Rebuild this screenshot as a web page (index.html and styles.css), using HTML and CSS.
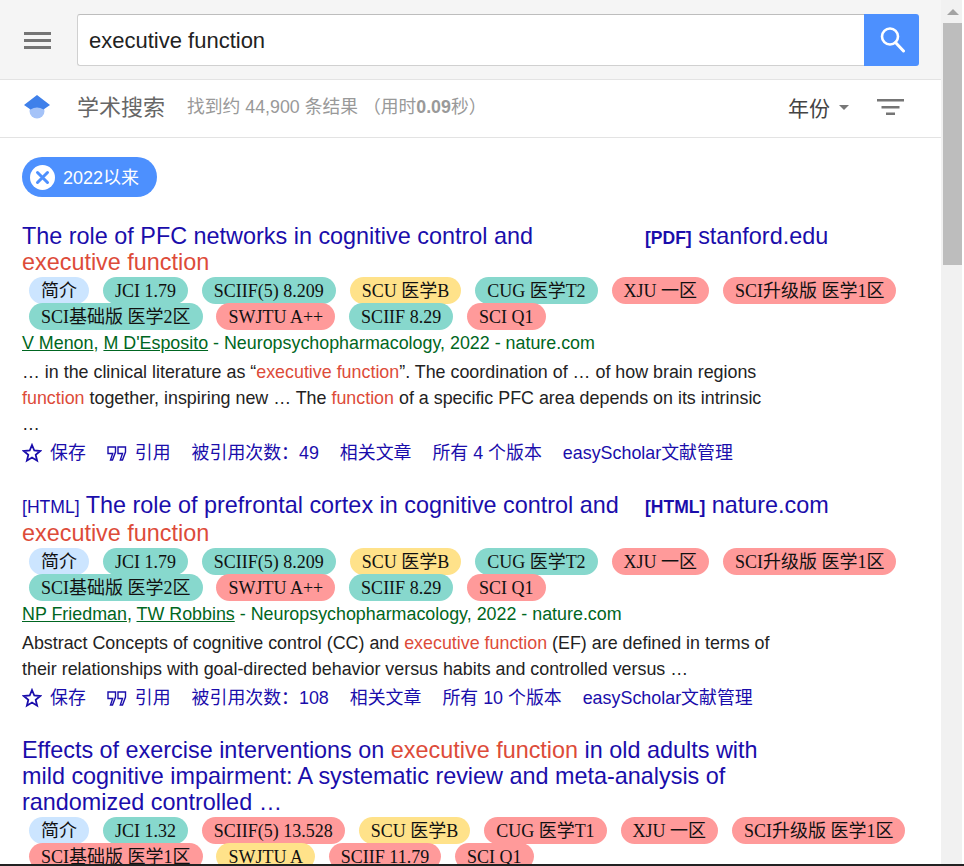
FILE: index.html
```html
<!DOCTYPE html>
<html lang="zh">
<head>
<meta charset="utf-8">
<title>executive function - 学术搜索</title>
<link rel="stylesheet" href="styles.css">
</head>
<body>
<div class="window">
  <main class="page">
    <header class="topbar">
      <svg class="menu-icon" width="27" height="17" viewBox="0 0 27 17"><path d="M0 0h27v3H0zM0 7h27v3H0zM0 14h27v3H0z" fill="#757575"/></svg>
      <div class="search">
        <div class="search-input">executive function</div>
        <div class="search-btn">
          <svg width="26" height="26" viewBox="0 0 26 26" fill="none" stroke="#fff" stroke-width="2.600"><circle cx="11" cy="9.500" r="8"/><path d="M16.500 15.500l8 8.500" stroke-linecap="round" stroke-width="3"/></svg>
        </div>
      </div>
    </header>
    <div class="subbar">
      <svg class="logo" width="26" height="24" viewBox="0 0 26 24"><circle cx="13" cy="16" r="7.500" fill="#a5c3f8"/><path d="M13 0l13 10-6.500 4.500Q13 10.500 6.500 14.500L0 10z" fill="#3f80ea"/></svg>
      <span class="brand">学术搜索</span>
      <span class="stats">找到约 44,900 条结果 （用时<b>0.09</b>秒）</span>
      <span class="year">年份</span>
      <span class="caret"></span>
      <svg class="filter" width="27" height="16" viewBox="0 0 27 16"><path d="M0 0h27v2.500H0zM4.500 7h18v2.500h-18zM9 13.500h9V16H9z" fill="#757575"/></svg>
    </div>
    <div class="content">
      <div class="chip">
        <svg width="25" height="25" viewBox="0 0 25 25"><circle cx="12.500" cy="12.500" r="12.500" fill="#fff"/><path d="M7.500 7.500l10 10M17.500 7.500l-10 10" stroke="#4d90fe" stroke-width="3" stroke-linecap="round"/></svg>
        <span>2022以来</span>
      </div>

      <article class="result">
        <div class="title-row">
          <h3 class="title">The role of PFC networks in cognitive control and <em>executive function</em></h3>
          <div class="side"><b>[PDF]</b> stanford.edu</div>
        </div>
        <div class="tags">
          <span class="tag blue">简介</span><span class="tag teal">JCI 1.79</span><span class="tag teal">SCIIF(5) 8.209</span><span class="tag yellow">SCU 医学B</span><span class="tag teal">CUG 医学T2</span><span class="tag red">XJU 一区</span><span class="tag red">SCI升级版 医学1区</span><span class="tag teal">SCI基础版 医学2区</span><span class="tag red">SWJTU A++</span><span class="tag teal">SCIIF 8.29</span><span class="tag red">SCI Q1</span>
        </div>
        <div class="meta"><u>V Menon</u>, <u>M D'Esposito</u> - Neuropsychopharmacology, 2022 - nature.com</div>
        <p class="snippet">… in the clinical literature as “<em>executive function</em>”. The coordination of … of how brain regions <em>function</em> together, inspiring new … The <em>function</em> of a specific PFC area depends on its intrinsic …</p>
        <div class="actions">
          <span class="action"><svg class="star" width="20" height="20" viewBox="0 0 20 20"><path d="M10 2l2.300 5.500 5.900.5-4.500 3.900 1.400 5.800L10 14.600l-5.100 3.100 1.400-5.800L1.800 8l5.900-.5z" fill="none" stroke="#1a0dab" stroke-width="1.800"/></svg>保存</span>
          <span class="action"><svg class="quote" width="20" height="15" viewBox="0 0 20 15"><path d="M1 1h7.500v5l-3 8H3.500l2.200-6.500H1zM11 1h7.500v5l-3 8h-2.200l2.200-6.500H11z" fill="none" stroke="#1a0dab" stroke-width="1.400"/></svg>引用</span>
          <span>被引用次数：49</span>
          <span>相关文章</span>
          <span>所有 4 个版本</span>
          <span>easyScholar文献管理</span>
        </div>
      </article>

      <article class="result">
        <div class="title-row">
          <h3 class="title"><small>[HTML]</small> The role of prefrontal cortex in cognitive control and <em>executive function</em></h3>
          <div class="side"><b>[HTML]</b> nature.com</div>
        </div>
        <div class="tags">
          <span class="tag blue">简介</span><span class="tag teal">JCI 1.79</span><span class="tag teal">SCIIF(5) 8.209</span><span class="tag yellow">SCU 医学B</span><span class="tag teal">CUG 医学T2</span><span class="tag red">XJU 一区</span><span class="tag red">SCI升级版 医学1区</span><span class="tag teal">SCI基础版 医学2区</span><span class="tag red">SWJTU A++</span><span class="tag teal">SCIIF 8.29</span><span class="tag red">SCI Q1</span>
        </div>
        <div class="meta"><u>NP Friedman</u>, <u>TW Robbins</u> - Neuropsychopharmacology, 2022 - nature.com</div>
        <p class="snippet">Abstract Concepts of cognitive control (CC) and <em>executive function</em> (EF) are defined in terms of their relationships with goal-directed behavior versus habits and controlled versus …</p>
        <div class="actions">
          <span class="action"><svg class="star" width="20" height="20" viewBox="0 0 20 20"><path d="M10 2l2.300 5.500 5.900.5-4.500 3.900 1.400 5.800L10 14.600l-5.100 3.100 1.400-5.800L1.800 8l5.900-.5z" fill="none" stroke="#1a0dab" stroke-width="1.800"/></svg>保存</span>
          <span class="action"><svg class="quote" width="20" height="15" viewBox="0 0 20 15"><path d="M1 1h7.500v5l-3 8H3.500l2.200-6.500H1zM11 1h7.500v5l-3 8h-2.200l2.200-6.500H11z" fill="none" stroke="#1a0dab" stroke-width="1.400"/></svg>引用</span>
          <span>被引用次数：108</span>
          <span>相关文章</span>
          <span>所有 10 个版本</span>
          <span>easyScholar文献管理</span>
        </div>
      </article>

      <article class="result">
        <h3 class="title wide">Effects of exercise interventions on <em>executive function</em> in old adults with mild cognitive impairment: A systematic review and meta-analysis of randomized controlled …</h3>
        <div class="tags">
          <span class="tag blue">简介</span><span class="tag teal">JCI 1.32</span><span class="tag red">SCIIF(5) 13.528</span><span class="tag yellow">SCU 医学B</span><span class="tag red">CUG 医学T1</span><span class="tag red">XJU 一区</span><span class="tag red">SCI升级版 医学1区</span><span class="tag red">SCI基础版 医学1区</span><span class="tag yellow">SWJTU A</span><span class="tag red">SCIIF 11.79</span><span class="tag red">SCI Q1</span>
        </div>
      </article>
    </div>
  </main>
  <aside class="scrollbar">
    <span class="arrow"></span>
    <span class="thumb"></span>
  </aside>
</div>
<div class="edge"></div>
</body>
</html>
```
FILE: styles.css
```css
* { box-sizing: border-box; }
html, body { margin: 0; padding: 0; height: 100%; overflow: hidden; background: #fff; }
body {
  font-family: "Liberation Sans", "Noto Sans CJK SC", sans-serif;
  font-size: 18px;
  color: #222;
  display: flex;
  flex-direction: column;
}
.window { display: flex; height: 864px; overflow: hidden; padding-right: 2px; }
.edge { height: 2px; background: #222; }
.page { width: 941px; flex: none; height: 864px; overflow: hidden; }

.topbar {
  height: 80px;
  background: #f5f5f5;
  border-bottom: 1px solid #e3e3e3;
  padding: 14px 22px 13px 24px;
  display: flex;
  align-items: center;
}
.menu-icon { margin-right: 26px; flex: none; }
.search { flex: 1; height: 52px; display: flex; }
.search-input {
  flex: 1;
  background: #fff;
  border: 1px solid #d0d0d0;
  border-top-color: #bdbdbd;
  border-right: 0;
  border-radius: 3px 0 0 3px;
  padding: 1px 0 0 11px;
  font-size: 22px;
  line-height: 50px;
  color: #222;
}
.search-btn {
  width: 55px;
  background: #4d90fe;
  border-radius: 0 3px 3px 0;
  display: flex;
  align-items: center;
  justify-content: center;
}

.subbar {
  height: 58px;
  border-bottom: 1px solid #e3e3e3;
  padding: 15px 37px 0 24px;
  display: flex;
  align-items: flex-start;
}
.logo { flex: none; margin-right: 27px; }
.brand { font-size: 22px; line-height: 26px; color: #666; margin-right: 22px; }
.stats { font-size: 17.800px; line-height: 24px; color: #999; flex: 1; }
.year { font-size: 21px; line-height: 28px; color: #444; }
.caret {
  width: 0; height: 0;
  margin: 10px 28px 0 9px;
  border-left: 5px solid transparent;
  border-right: 5px solid transparent;
  border-top: 5px solid #777;
}
.filter { margin-top: 4px; flex: none; }

.content { padding: 19px 22px 0; }
.chip {
  width: 135px;
  height: 40px;
  background: #4d90fe;
  border-radius: 20px;
  padding: 0 0 2px 8px;
  display: flex;
  align-items: center;
  gap: 8px;
  color: #fff;
  font-size: 18px;
}
.chip svg { margin-top: 2px; }
.result { margin-top: 26px; }
.title-row { display: flex; gap: 23px; }
.title {
  width: 600px;
  flex: none;
  margin: 0;
  font-size: 23.400px;
  line-height: 26px;
  font-weight: normal;
  color: #1a0dab;
}
.title.wide { width: 760px; }
.title small { font-size: 17.600px; line-height: 25px; }
em { font-style: normal; color: #dd4b39; }
.side { font-size: 23.400px; line-height: 26px; color: #1a0dab; white-space: nowrap; }
.side b { font-size: 17.500px; }

.tags {
  display: flex;
  flex-wrap: wrap;
  gap: 0 13.900px;
  padding-left: 7px;
  margin-top: 2px;
}
.tag {
  height: 27px;
  margin-bottom: -1px;
  padding: 0 12px;
  border-radius: 13.500px;
  font-family: "Liberation Serif", "Noto Sans CJK SC", serif;
  font-size: 18px;
  line-height: 28px;
  color: #111;
  white-space: nowrap;
}
.blue { background: #cce5ff; }
.teal { background: #87d8cd; }
.yellow { background: #ffe28a; }
.red { background: #ff9a9a; }

.meta { font-size: 17.880px; line-height: 26px; color: #006621; white-space: nowrap; padding-top: 1px; }
.snippet { font-size: 17.880px; margin: 3px 0 0; width: 760px; line-height: 26px; color: #222; }
.actions {
  display: flex;
  gap: 21px;
  margin-top: 3px;
  font-size: 17.900px;
  line-height: 26px;
  color: #1a0dab;
  white-space: nowrap;
}
.action { display: flex; align-items: center; gap: 8px; }
.star, .quote { flex: none; }

.scrollbar {
  width: 21px;
  flex: none;
  background: #f1f1f1;
  display: flex;
  flex-direction: column;
  align-items: flex-end;
}
.arrow {
  align-self: center;
  margin: 9px 0 0 2px;
  width: 0; height: 0;
  border-left: 6px solid transparent;
  border-right: 6px solid transparent;
  border-bottom: 6px solid #a3a3a3;
}
.thumb { width: 19px; height: 242px; margin-top: 8px; background: #bdbdbd; }
```
